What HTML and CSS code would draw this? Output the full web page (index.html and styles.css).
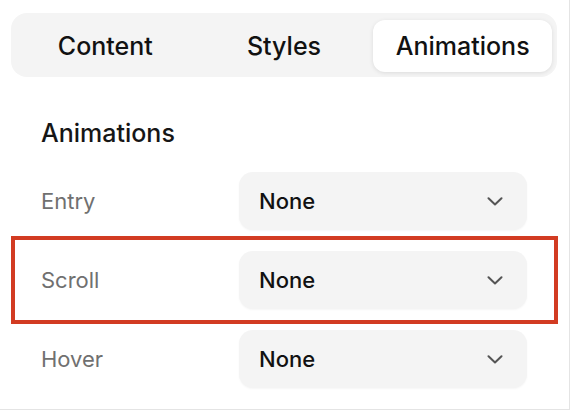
FILE: index.html
```html
<!DOCTYPE html>
<html lang="en">
<head>
<meta charset="utf-8">
<title>Animations panel</title>
<link rel="stylesheet" href="styles.css">
</head>
<body>
<div class="panel">
  <div class="tabs">
    <div class="tab">Content</div>
    <div class="tab">Styles</div>
    <div class="tab active">Animations</div>
  </div>
  <h2 class="heading">Animations</h2>
  <div class="rows">
    <div class="row">
      <span class="label">Entry</span>
      <div class="select"><span>None</span>
        <svg class="chev" width="16" height="9" viewBox="0 0 16 9"><path d="M1.5 1.2 L8 7.5 L14.5 1.2" fill="none" stroke="#555" stroke-width="2" stroke-linecap="round" stroke-linejoin="round"/></svg>
      </div>
    </div>
    <div class="row highlight">
      <span class="label">Scroll</span>
      <div class="select"><span>None</span>
        <svg class="chev" width="16" height="9" viewBox="0 0 16 9"><path d="M1.5 1.2 L8 7.5 L14.5 1.2" fill="none" stroke="#555" stroke-width="2" stroke-linecap="round" stroke-linejoin="round"/></svg>
      </div>
    </div>
    <div class="row">
      <span class="label">Hover</span>
      <div class="select"><span>None</span>
        <svg class="chev" width="16" height="9" viewBox="0 0 16 9"><path d="M1.5 1.2 L8 7.5 L14.5 1.2" fill="none" stroke="#555" stroke-width="2" stroke-linecap="round" stroke-linejoin="round"/></svg>
      </div>
    </div>
  </div>
</div>
</body>
</html>
```
FILE: styles.css
```css
* { box-sizing: border-box; }
html, body { margin: 0; padding: 0; background: #fff; }
body { font-family: Inter, "Noto Sans", sans-serif; color: #111; }

.panel {
  width: 570px;
  height: 410px;
  border-right: 1px solid #e4e4e4;
  border-bottom: 1px solid #e4e4e4;
  padding-top: 13px;
}

.tabs {
  margin-left: 11px;
  width: 546px;
  height: 64px;
  background: #f4f4f4;
  border-radius: 16px;
  padding: 7px 5px 5px 5px;
  display: flex;
}
.tab {
  flex: 1;
  display: flex;
  align-items: center;
  justify-content: center;
  font-size: 25px;
  font-weight: 500;
  color: #111;
  border-radius: 12px;
}
.tab.active {
  background: #fff;
  box-shadow: 0 1px 4px rgba(0,0,0,0.10);
}

.heading {
  margin: 41px 0 0 41px;
  font-size: 25px;
  line-height: 30px;
  font-weight: 500;
  color: #161616;
}

.rows {
  margin-top: 24px;
  display: flex;
  flex-direction: column;
  gap: 21px;
}
.row {
  position: relative;
  margin: 0 11px;
  padding: 0 31px 0 30px;
  height: 58px;
  display: flex;
  align-items: center;
}
.row.highlight::after {
  content: "";
  position: absolute;
  left: 0; right: 0; top: -15px; bottom: -15px;
  border: 4px solid #d23b22;
  pointer-events: none;
}
.label {
  width: 198px;
  font-size: 22px;
  color: #707070;
}
.select {
  width: 288px;
  height: 58px;
  background: #f4f4f4;
  border-radius: 14px;
  box-shadow: 0 1px 2px rgba(0,0,0,0.04);
  display: flex;
  align-items: center;
  justify-content: space-between;
  padding: 0 24px 0 20px;
  font-size: 22px;
  font-weight: 500;
  color: #111;
}
.chev { display: block; }
```
